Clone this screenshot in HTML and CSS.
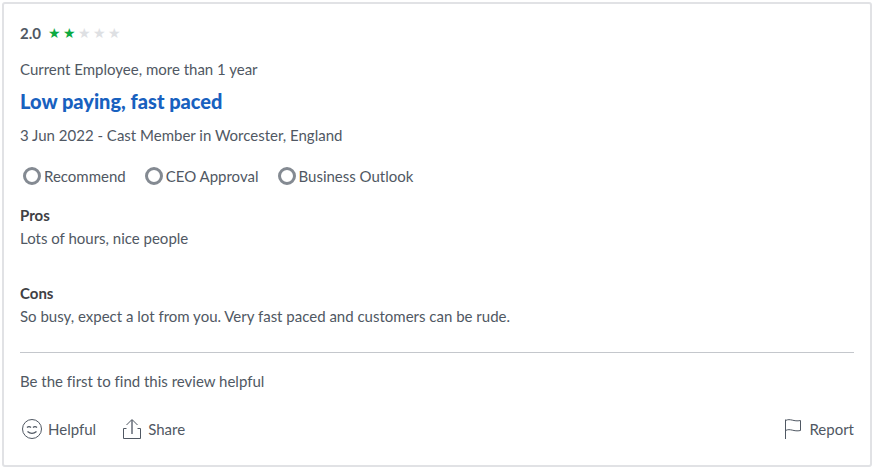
FILE: index.html
```html
<!DOCTYPE html>
<html lang="en">
<head>
<meta charset="utf-8">
<title>Employee review</title>
<link rel="stylesheet" href="styles.css">
</head>
<body>
<article class="review">
  <div class="rating">
    <span class="score">2.0</span>
    <span class="stars" role="img" aria-label="2 out of 5 stars"><span class="star on">★</span><span class="star on">★</span><span class="star">★</span><span class="star">★</span><span class="star">★</span></span>
  </div>
  <p class="tenure">Current Employee, more than 1 year</p>
  <h2 class="title"><a href="#">Low paying, fast paced</a></h2>
  <p class="author">3 Jun 2022 - Cast Member in Worcester, England</p>
  <ul class="opinions">
    <li><svg class="ring" viewBox="0 0 24 24"><circle cx="12" cy="12" r="7.5"/></svg>Recommend</li>
    <li><svg class="ring" viewBox="0 0 24 24"><circle cx="12" cy="12" r="7.5"/></svg>CEO Approval</li>
    <li><svg class="ring" viewBox="0 0 24 24"><circle cx="12" cy="12" r="7.5"/></svg>Business Outlook</li>
  </ul>
  <section class="pros">
    <h3>Pros</h3>
    <p>Lots of hours, nice people</p>
  </section>
  <section class="cons">
    <h3>Cons</h3>
    <p>So busy, expect a lot from you. Very fast paced and customers can be rude.</p>
  </section>
  <footer>
    <p class="helpful-count">Be the first to find this review helpful</p>
    <div class="actions">
      <button type="button"><svg viewBox="0 0 24 24"><circle cx="12" cy="12" r="9.5"/><path d="M7 10.500q2-1.800 4 0M13 10.500q2-1.800 4 0M7.500 14.500q4.500 3.600 9 0" stroke-width="1.300"/></svg>Helpful</button>
      <button type="button"><svg viewBox="0 0 24 24"><path d="M6.500 11.500h-3v10h17v-10h-3"/><path class="arrow" d="M12 17V3"/><path d="M6.500 8L12 2.500 17.500 8"/></svg>Share</button>
      <button type="button" class="report"><svg viewBox="0 0 24 24"><path d="M4.500 22V2.500M4.500 3.500c5-2.500 8 1.500 15 0v10c-7 1.500-10-2.500-15 0"/></svg>Report</button>
    </div>
  </footer>
</article>
</body>
</html>
```
FILE: styles.css
```css
* { box-sizing: border-box; }
body { margin: 0; padding: 2px; background: #fff; color: #505863; font: 15px/23px Lato, sans-serif; font-variant-ligatures: none; }
p, h2, h3, ul { margin: 0; padding: 0; }
.review { border: 2px solid #e1e2e5; border-radius: 3px; padding: 18px 16px 24px; }
.rating { display: flex; align-items: center; gap: 7px; }
.score { font-weight: 700; }
.stars { display: flex; }
.star { width: 15px; color: #dee0e3; font: 14px/23px "DejaVu Sans", sans-serif; }
.star.on { color: #0caa41; }
.tenure { margin-top: 13px; }
.title { margin-top: 8px; font-size: 20px; line-height: 24px; font-weight: 900; }
.title a { color: #1861bf; text-decoration: none; }
.author { margin-top: 11px; }
.opinions { display: flex; gap: 16px; margin-top: 17px; list-style: none; }
.opinions li { display: flex; align-items: center; }
svg { width: 24px; height: 24px; fill: none; stroke: currentColor; stroke-width: 1; }
.ring { stroke: #848a92; stroke-width: 3; }
.arrow { stroke: #8b9099; stroke-width: 2; }
.pros { margin-top: 16px; }
.cons { margin-top: 32px; }
h3 { color: #404044; font-size: 15px; line-height: 23px; font-weight: 700; }
footer { margin-top: 24px; padding-top: 17px; border-top: 1px solid #c4c7cc; }
.actions { display: flex; gap: 24px; margin-top: 24px; }
button { display: flex; align-items: center; gap: 4px; padding: 0; border: 0; background: none; color: inherit; font: inherit; font-variant-ligatures: none; }
.report { margin-left: auto; }
```
